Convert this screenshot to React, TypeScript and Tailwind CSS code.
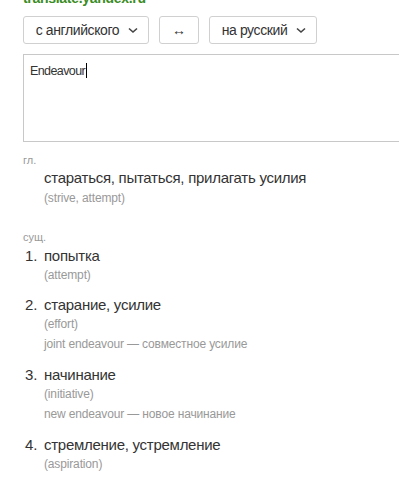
const font = { fontFamily: '"Liberation Sans", Arial, sans-serif' };

type Meaning = { text: string; gloss: string; example?: string };

const nouns: Meaning[] = [
  { text: "попытка", gloss: "(attempt)" },
  { text: "старание, усилие", gloss: "(effort)", example: "joint endeavour — совместное усилие" },
  { text: "начинание", gloss: "(initiative)", example: "new endeavour — новое начинание" },
  { text: "стремление, устремление", gloss: "(aspiration)" },
];

function Chevron() {
  return (
    <svg width="10" height="7" viewBox="0 0 10 7" className="ml-[9px]" aria-hidden>
      <path d="M1 1.5 L5 5 L9 1.5" fill="none" stroke="#444" strokeWidth="1.6" />
    </svg>
  );
}

export default function App() {
  return (
    <div className="min-h-[480px] overflow-hidden bg-white pl-[23px] text-[#333]" style={font}>
      <div className="mt-[-9px] text-[14px] font-bold leading-[14px] tracking-[-0.3px] text-[#3a8c25]">
        translate.yandex.ru
      </div>

      <div className="mt-[11px] flex gap-[10px]">
        <button className="flex h-[28px] w-[126px] items-center justify-center rounded-[3px] border border-[#d0d0d0] bg-white pl-[2px] text-[14px] tracking-[-0.4px] text-[#333]">
          с английского
          <Chevron />
        </button>
        <button className="flex h-[28px] w-[40px] items-center justify-center rounded-[3px] border border-[#d0d0d0] bg-white text-[14px] text-[#333]">
          ↔
        </button>
        <button className="flex h-[28px] w-[108px] items-center justify-center rounded-[3px] border border-[#d0d0d0] bg-white pl-[2px] text-[14px] tracking-[-0.4px] text-[#333]">
          на русский
          <Chevron />
        </button>
      </div>

      <div className="mt-[10px] h-[88px] w-[400px] border border-[#c8c8c8] px-[6px] pt-[5px] text-[12.5px] leading-[18px] tracking-[-0.6px] text-[#333]">
        Endeavour<span className="ml-px inline-block h-[15px] w-px translate-y-[3px] bg-black" />
      </div>

      <div className="mt-[11px] text-[11px] leading-[14px] text-[#999]">гл.</div>
      <div className="mt-[2px] pl-[21px]">
        <div className="text-[15px] leading-[18px] tracking-[-0.27px]">стараться, пытаться, прилагать усилия</div>
        <div className="mt-px text-[12px] leading-[20px] tracking-[-0.15px] text-[#999]">(strive, attempt)</div>
      </div>

      <div className="mt-[22px] text-[11px] leading-[14px] text-[#999]">сущ.</div>
      <ol className="mt-[2px]">
        {nouns.map((m, i) => (
          <li key={m.text} className={i > 0 ? "mt-[10px] flex" : "flex"}>
            <span className="w-[21px] pl-[2px] text-[15px] leading-[19px]">{i + 1}.</span>
            <div>
              <div className="text-[15px] leading-[19px] tracking-[-0.27px]">{m.text}</div>
              <div className="text-[12px] leading-[20px] tracking-[-0.15px] text-[#999]">{m.gloss}</div>
              {m.example ? (
                <div className="text-[12px] leading-[21px] tracking-[-0.15px] text-[#999]">{m.example}</div>
              ) : null}
            </div>
          </li>
        ))}
      </ol>
    </div>
  );
}
